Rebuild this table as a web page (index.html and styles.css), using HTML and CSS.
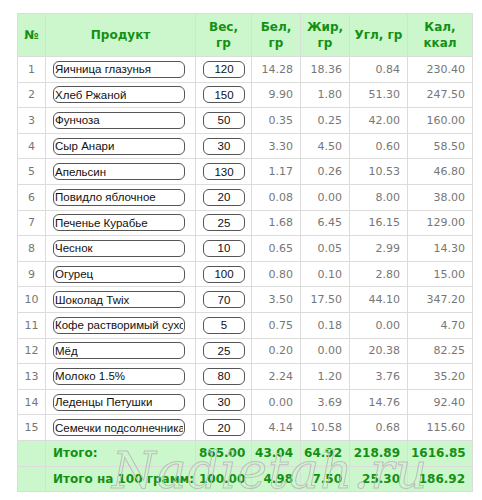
FILE: index.html
```html
<!DOCTYPE html>
<html>
<head>
<meta charset="utf-8">
<link rel="stylesheet" href="styles.css">
</head>
<body>
<div class="wrap">
<table class="tbl">
<colgroup>
<col class="c-n"><col class="c-p"><col class="c-w"><col class="c-b"><col class="c-f"><col class="c-u"><col class="c-k">
</colgroup>
<thead>
<tr><th>№</th><th>Продукт</th><th>Вес,<br>гр</th><th>Бел,<br>гр</th><th>Жир,<br>гр</th><th>Угл, гр</th><th>Кал,<br>ккал</th></tr>
</thead>
<tbody>
<tr><td class="n">1</td><td class="p"><input class="in-p" value="Яичница глазунья"></td><td class="w"><input class="in-w" value="120"></td><td>14.28</td><td>18.36</td><td>0.84</td><td>230.40</td></tr>
<tr><td class="n">2</td><td class="p"><input class="in-p" value="Хлеб Ржаной"></td><td class="w"><input class="in-w" value="150"></td><td>9.90</td><td>1.80</td><td>51.30</td><td>247.50</td></tr>
<tr><td class="n">3</td><td class="p"><input class="in-p" value="Фунчоза"></td><td class="w"><input class="in-w" value="50"></td><td>0.35</td><td>0.25</td><td>42.00</td><td>160.00</td></tr>
<tr><td class="n">4</td><td class="p"><input class="in-p" value="Сыр Анари"></td><td class="w"><input class="in-w" value="30"></td><td>3.30</td><td>4.50</td><td>0.60</td><td>58.50</td></tr>
<tr><td class="n">5</td><td class="p"><input class="in-p" value="Апельсин"></td><td class="w"><input class="in-w" value="130"></td><td>1.17</td><td>0.26</td><td>10.53</td><td>46.80</td></tr>
<tr><td class="n">6</td><td class="p"><input class="in-p" value="Повидло яблочное"></td><td class="w"><input class="in-w" value="20"></td><td>0.08</td><td>0.00</td><td>8.00</td><td>38.00</td></tr>
<tr><td class="n">7</td><td class="p"><input class="in-p" value="Печенье Курабье"></td><td class="w"><input class="in-w" value="25"></td><td>1.68</td><td>6.45</td><td>16.15</td><td>129.00</td></tr>
<tr><td class="n">8</td><td class="p"><input class="in-p" value="Чеснок"></td><td class="w"><input class="in-w" value="10"></td><td>0.65</td><td>0.05</td><td>2.99</td><td>14.30</td></tr>
<tr><td class="n">9</td><td class="p"><input class="in-p" value="Огурец"></td><td class="w"><input class="in-w" value="100"></td><td>0.80</td><td>0.10</td><td>2.80</td><td>15.00</td></tr>
<tr><td class="n">10</td><td class="p"><input class="in-p" value="Шоколад Twix"></td><td class="w"><input class="in-w" value="70"></td><td>3.50</td><td>17.50</td><td>44.10</td><td>347.20</td></tr>
<tr><td class="n">11</td><td class="p"><input class="in-p" value="Кофе растворимый сухой"></td><td class="w"><input class="in-w" value="5"></td><td>0.75</td><td>0.18</td><td>0.00</td><td>4.70</td></tr>
<tr><td class="n">12</td><td class="p"><input class="in-p" value="Мёд"></td><td class="w"><input class="in-w" value="25"></td><td>0.20</td><td>0.00</td><td>20.38</td><td>82.25</td></tr>
<tr><td class="n">13</td><td class="p"><input class="in-p" value="Молоко 1.5%"></td><td class="w"><input class="in-w" value="80"></td><td>2.24</td><td>1.20</td><td>3.76</td><td>35.20</td></tr>
<tr><td class="n">14</td><td class="p"><input class="in-p" value="Леденцы Петушки"></td><td class="w"><input class="in-w" value="30"></td><td>0.00</td><td>3.69</td><td>14.76</td><td>92.40</td></tr>
<tr><td class="n">15</td><td class="p"><input class="in-p" value="Семечки подсолнечника"></td><td class="w"><input class="in-w" value="20"></td><td>4.14</td><td>10.58</td><td>0.68</td><td>115.60</td></tr>
</tbody>
<tfoot>
<tr><td></td><td class="lbl">Итого:</td><td>865.00</td><td>43.04</td><td>64.92</td><td>218.89</td><td>1616.85</td></tr>
<tr><td></td><td class="lbl">Итого на 100 грамм:</td><td>100.00</td><td>4.98</td><td>7.50</td><td>25.30</td><td>186.92</td></tr>
</tfoot>
</table>
<span class="mark">Nadietah.ru</span>
</div>
</body>
</html>
```

FILE: styles.css
```css
html, body { margin: 0; padding: 0; background: #fff; }
.wrap { position: relative; padding: 13px 0 0 17px; }
.tbl {
  border-collapse: collapse;
  table-layout: fixed;
  width: 455px;
  font-family: "DejaVu Sans", Verdana, sans-serif;
  font-size: 11px;
  color: #777;
}
.c-n { width: 28px; }
.c-p { width: 150px; }
.c-w { width: 56px; }
.c-b { width: 49px; }
.c-f { width: 49px; }
.c-u { width: 58px; }
.c-k { width: 65px; }
.tbl th, .tbl td { border: 1px solid #dcdcdc; }
.tbl th {
  background: #ccf7cc;
  color: #149014;
  font-weight: bold;
  font-size: 12px;
  line-height: 16px;
  height: 42px;
  padding: 0 2px;
  text-align: center;
}
.tbl td {
  height: 24.6px;
  padding: 0 7px 0 3px;
  text-align: right;
  white-space: nowrap;
}
.tbl td.n { text-align: center; padding: 0; }
.tbl td.p { padding: 0 0 0 7px; text-align: left; }
.tbl td.w { padding: 0 0 0 7px; text-align: left; }
.tbl input {
  box-sizing: border-box;
  height: 17px;
  border: 1.5px solid #555;
  border-radius: 6px;
  font-family: "Liberation Sans", Arial, sans-serif;
  font-size: 11.5px;
  color: #111;
  background: #fff;
  padding: 0 1px;
  display: block;
}
.in-p { width: 132px; }
.in-w { width: 42px; text-align: center; }
.tbl tfoot td {
  background: #ccf7cc;
  color: #149014;
  font-weight: bold;
  font-size: 12px;
}
.tbl tfoot td.lbl { text-align: left; padding-left: 7px; }
.mark {
  position: absolute;
  left: 112px;
  top: 442px;
  font-family: "DejaVu Serif", serif;
  font-style: italic;
  font-size: 50px;
  color: transparent;
  -webkit-text-stroke: 1px #bdbdbd;
  letter-spacing: 1px;
  pointer-events: none;
}
```
